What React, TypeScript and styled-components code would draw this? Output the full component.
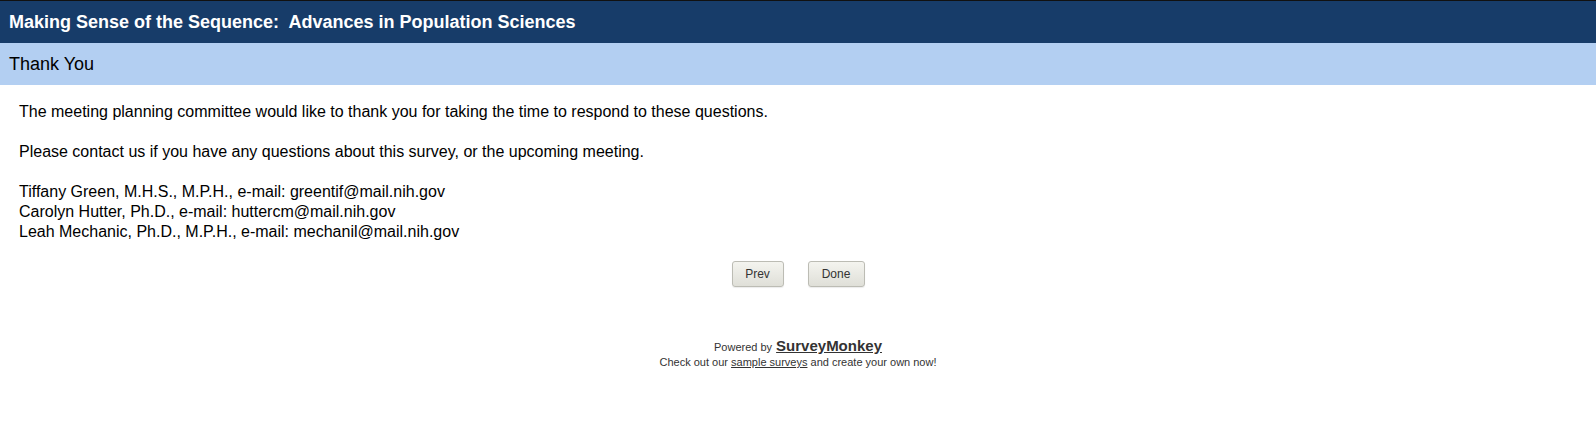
import React from "react";
import styled, { createGlobalStyle } from "styled-components";

const GlobalStyle = createGlobalStyle`
  html, body { margin: 0; padding: 0; background: #ffffff; }
  body { font-family: Arial, "Liberation Sans", Helvetica, sans-serif; color: #000; }
`;

const Page = styled.div`
  display: flex;
  flex-direction: column;
  border-top: 1px solid #111111;
`;

const TitleBar = styled.div`
  background: #173c69;
  height: 42px;
  display: flex;
  align-items: center;
  padding: 0 9px;
  color: #ffffff;
  font-weight: bold;
  font-size: 18px;
  white-space: pre;
`;

const PageBar = styled.div`
  background: #b3cff2;
  height: 42px;
  display: flex;
  align-items: center;
  padding: 0 9px;
  color: #000000;
  font-size: 18px;
`;

const Body = styled.div`
  padding: 17px 19px 0;
  font-size: 16px;
  line-height: 20px;
  color: #000;
`;

const Para = styled.p`
  margin: 0 0 20px;
  &:last-child { margin-bottom: 0; }
`;

const Buttons = styled.div`
  display: flex;
  justify-content: center;
  gap: 24px;
  margin-top: 19px;
`;

const NavButton = styled.button<{ $w: number }>`
  width: ${(p) => p.$w}px;
  height: 26px;
  padding: 0;
  font-family: Arial, "Liberation Sans", sans-serif;
  font-size: 12px;
  color: #333333;
  background: linear-gradient(#f4f4ef, #dfdfd8);
  border: 1px solid #bcbcb4;
  border-radius: 3px;
  box-shadow: 0 1px 1px rgba(0, 0, 0, 0.08);
  cursor: pointer;
`;

const Footer = styled.div`
  margin-top: 51px;
  display: flex;
  flex-direction: column;
  align-items: center;
  font-size: 11px;
  color: #333333;
  line-height: 15px;
`;

const Powered = styled.div`
  display: flex;
  align-items: baseline;
  gap: 4px;
`;

const Brand = styled.a`
  font-size: 15px;
  font-weight: bold;
  color: #333333;
  text-decoration: underline;
`;

const FooterLink = styled.a`
  color: #333333;
  text-decoration: underline;
`;

export default function App() {
  return (
    <>
      <GlobalStyle />
      <Page>
        <TitleBar>{"Making Sense of the Sequence:  Advances in Population Sciences"}</TitleBar>
        <PageBar>Thank You</PageBar>
        <Body>
          <Para>
            The meeting planning committee would like to thank you for taking the time to respond to these questions.
          </Para>
          <Para>Please contact us if you have any questions about this survey, or the upcoming meeting.</Para>
          <Para>
            Tiffany Green, M.H.S., M.P.H., e-mail: greentif@mail.nih.gov
            <br />
            Carolyn Hutter, Ph.D., e-mail: huttercm@mail.nih.gov
            <br />
            Leah Mechanic, Ph.D., M.P.H., e-mail: mechanil@mail.nih.gov
          </Para>
        </Body>
        <Buttons>
          <NavButton $w={52}>Prev</NavButton>
          <NavButton $w={57}>Done</NavButton>
        </Buttons>
        <Footer>
          <Powered>
            <span>Powered by</span>
            <Brand href="#">SurveyMonkey</Brand>
          </Powered>
          <div>
            Check out our <FooterLink href="#">sample surveys</FooterLink> and create your own now!
          </div>
        </Footer>
      </Page>
    </>
  );
}
